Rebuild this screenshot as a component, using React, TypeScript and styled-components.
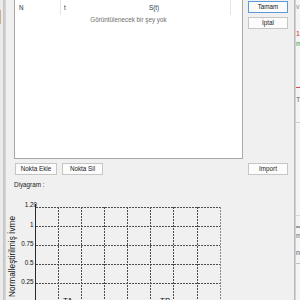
import React from "react";
import styled, { createGlobalStyle } from "styled-components";

const GlobalStyle = createGlobalStyle`
  html, body { margin: 0; padding: 0; overflow: hidden; background: #f0f0f0; }
  #root { width: 300px; height: 300px; }
`;

const Frame = styled.div`
  display: flex;
  width: 300px;
  height: 300px;
  overflow: hidden;
  background: #f0f0f0;
  font-family: "Liberation Sans", Arial, sans-serif;
  font-size: 6.3px;
  color: #1a1a1a;
`;

const LeftEdge = styled.div`
  display: flex;
  flex: none;
  width: 6px;
`;

const EdgeOuter = styled.div`
  width: 3px;
  background: #ebebeb;
  display: flex;
  flex-direction: column;
`;

const TanMark = styled.div`
  margin-top: 10px;
  width: 1px;
  height: 14px;
  background: #c9b48e;
`;

const EdgeInner = styled.div`
  width: 3px;
  background: linear-gradient(to right, #c2c2c2, #d8d8d8);
`;

const Main = styled.div`
  flex: none;
  width: 288px;
  display: flex;
  flex-direction: column;
  margin-top: -1px;
`;

const TopRow = styled.div`
  display: flex;
  align-items: flex-start;
  gap: 5px;
  padding-left: 8px;
`;

const ListView = styled.div`
  box-sizing: border-box;
  width: 229px;
  height: 160px;
  background: #ffffff;
  border: 1px solid #a8a8a8;
`;

const Header = styled.div`
  display: flex;
  height: 15px;
`;

const HeaderCell = styled.div<{ $w: number; $pad: number; $sep?: boolean }>`
  box-sizing: border-box;
  width: ${(p) => p.$w}px;
  padding-left: ${(p) => p.$pad}px;
  line-height: 15px;
  color: #1e2f4a;
  border-right: 1px solid ${(p) => (p.$sep ? "#e5e5e5" : "transparent")};
`;

const EmptyText = styled.div`
  text-align: center;
  line-height: 10px;
  color: #6d6d6d;
`;

const ButtonColumn = styled.div`
  display: flex;
  flex-direction: column;
  gap: 4px;
  margin-top: 2px;
`;

const Button = styled.button<{ $w?: number; $default?: boolean; $push?: boolean }>`
  box-sizing: border-box;
  width: ${(p) => p.$w ?? 40}px;
  height: 12px;
  padding: 0;
  margin: 0;
  margin-left: ${(p) => (p.$push ? "auto" : "0")};
  background: #fcfcfc;
  border: 1px solid ${(p) => (p.$default ? "#5b9ad8" : "#c6c6c6")};
  border-radius: 0;
  font-family: "Liberation Sans", Arial, sans-serif;
  font-size: 6.3px;
  line-height: 10px;
  color: #1a1a1a;
`;

const ButtonRow = styled.div`
  display: flex;
  gap: 5px;
  margin-top: 4px;
  padding-left: 9px;
  padding-right: 6px;
`;

const SectionLabel = styled.div`
  margin-top: 6px;
  padding-left: 8px;
  line-height: 8px;
  color: #1a1a1a;
`;

const ChartSvg = styled.svg`
  display: block;
  margin-top: 6px;
  flex: none;
`;

const Separator = styled.div`
  box-sizing: border-box;
  flex: none;
  width: 2px;
  background: #d2d2d2;
  border-left: 1px solid #b9b9b9;
`;

const OtherPane = styled.div`
  flex: none;
  width: 4px;
  background: #f4f4f4;
  display: flex;
  flex-direction: column;
  overflow: hidden;
`;

const PaneText = styled.div<{ $top: number; $color: string }>`
  margin-top: ${(p) => p.$top}px;
  height: 8px;
  line-height: 8px;
  font-size: 7px;
  color: ${(p) => p.$color};
  white-space: nowrap;
`;

const PaneLine = styled.div<{ $top: number; $color: string; $h?: number }>`
  margin-top: ${(p) => p.$top}px;
  height: ${(p) => p.$h ?? 1}px;
  background: ${(p) => p.$color};
  flex: none;
`;

const gridY = [12, 31, 50, 69, 88];
const gridX = [52, 75, 98, 121, 144, 167, 191];
const ticks = [
  { label: "1", y: 31 },
  { label: "0.75", y: 50 },
  { label: "0.5", y: 69 },
  { label: "0.25", y: 88 },
];

function Chart() {
  return (
    <ChartSvg width={288} height={105} viewBox="0 0 288 105">
      <g shapeRendering="crispEdges" strokeWidth={1} fill="none">
        {gridY.map((y) => (
          <line key={"h" + y} x1={30} x2={214} y1={y + 0.5} y2={y + 0.5} stroke="#4c4c4c" strokeDasharray="2 1" />
        ))}
        {gridX.map((x) => (
          <line key={"v" + x} x1={x + 0.5} x2={x + 0.5} y1={12} y2={105} stroke="#4c4c4c" strokeDasharray="2 1" />
        ))}
        <line x1={214.5} x2={214.5} y1={12} y2={105} stroke="#8a8a8a" strokeDasharray="2 1" />
        <line x1={29.5} x2={29.5} y1={9} y2={105} stroke="#2a2a2a" />
      </g>
      <g fontFamily="Liberation Sans, Arial, sans-serif" fill="#111">
        <text x={31} y={11.5} fontSize={6.3} textAnchor="end">1.20</text>
        {ticks.map((t) => (
          <text key={t.label} x={27.5} y={t.y + 0.5} fontSize={6.3} textAnchor="end">
            {t.label}
          </text>
        ))}
        <text
          x={5.5}
          y={61.5}
          fontSize={8.3}
          textAnchor="middle"
          dominantBaseline="central"
          transform="rotate(-90 5.5 61.5)"
        >
          Normalleştirilmiş İvme
        </text>
        <text x={57} y={108} fontSize={8}>TA</text>
        <text x={154} y={108} fontSize={8}>TB</text>
      </g>
    </ChartSvg>
  );
}

export default function App() {
  return (
    <>
      <GlobalStyle />
      <Frame>
        <LeftEdge>
          <EdgeOuter>
            <TanMark />
          </EdgeOuter>
          <EdgeInner />
        </LeftEdge>
        <Main>
          <TopRow>
            <ListView>
              <Header>
                <HeaderCell $w={46} $pad={4} $sep>N</HeaderCell>
                <HeaderCell $w={85} $pad={3}>t</HeaderCell>
                <HeaderCell $w={85} $pad={3} $sep>S(t)</HeaderCell>
              </Header>
              <EmptyText>Görüntülenecek bir şey yok</EmptyText>
            </ListView>
            <ButtonColumn>
              <Button $default>Tamam</Button>
              <Button>İptal</Button>
            </ButtonColumn>
          </TopRow>
          <ButtonRow>
            <Button $w={42}>Nokta Ekle</Button>
            <Button $w={41}>Nokta Sil</Button>
            <Button $push>Import</Button>
          </ButtonRow>
          <SectionLabel>Diyagram :</SectionLabel>
          <Chart />
        </Main>
        <Separator />
        <OtherPane>
          <PaneText $top={3} $color="#8a8a8a">v</PaneText>
          <PaneText $top={19} $color="#e02424">1</PaneText>
          <PaneText $top={2} $color="#2e9a3e">m</PaneText>
          <PaneLine $top={39} $color="#e04a4a" />
          <PaneText $top={8} $color="#6a6a6a">T</PaneText>
          <PaneLine $top={18} $color="#cfcfcf" />
          <PaneLine $top={92} $color="#d8d8d8" />
          <PaneLine $top={10} $color="#9e9e9e" $h={2} />
          <PaneText $top={4} $color="#6a5a7a">m</PaneText>
          <PaneText $top={9} $color="#4a4a6a">n</PaneText>
          <PaneLine $top={6} $color="#c2c2c2" />
        </OtherPane>
      </Frame>
    </>
  );
}
